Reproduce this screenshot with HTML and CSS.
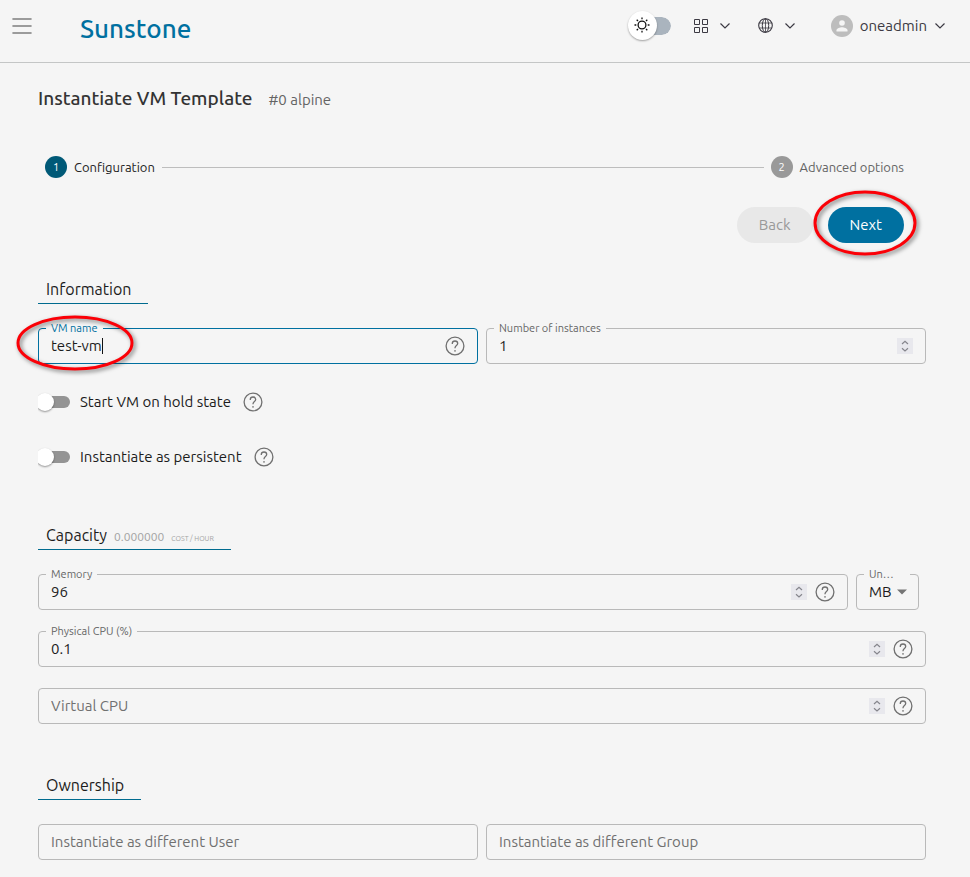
FILE: index.html
```html
<!DOCTYPE html>
<html lang="en">
<head>
<meta charset="utf-8">
<title>Sunstone</title>
<link rel="stylesheet" href="styles.css">
</head>
<body>
<svg class="defs" aria-hidden="true">
  <symbol id="chevron" viewBox="0 0 12 8"><path d="M1.500 1.500 6 6l4.500-4.500" fill="none" stroke="currentColor" stroke-width="1.200"/></symbol>
  <symbol id="help" viewBox="0 0 20 20"><g fill="none" stroke="currentColor" stroke-width="1.300"><circle cx="10" cy="10" r="8.900"/><path d="M7.300 8V7.400a2.700 2.400 0 0 1 5.400 0c0 2-2.700 2.200-2.700 4.500v.4"/></g><circle cx="10" cy="14.900" r=".8" fill="currentColor"/></symbol>
  <symbol id="spin" viewBox="0 0 16 16"><path d="M5 6l3-2.700L11 6M5 10.300l3 2.700 3-2.700" fill="none" stroke="currentColor" stroke-width="1.200"/></symbol>
</svg>
<header class="topbar">
  <button class="icon-btn menu" aria-label="Menu"><svg width="20" height="18" viewBox="0 0 20 18"><path d="M1 2h18M1 9h18M1 16h18" stroke="#7d7d7d" stroke-width="1.600" stroke-linecap="round"/></svg></button>
  <a class="brand" href="#">Sunstone</a>
  <nav class="tools">
    <label class="theme">
      <input type="checkbox" aria-label="Dark theme">
      <span class="theme-thumb"><svg width="16" height="16" viewBox="0 0 16 16" fill="none" stroke="#111"><circle cx="8" cy="8" r="3.900" stroke-width="1.300"/><path d="M8 .5v1.800M8 13.700v1.800M.5 8h1.800M13.700 8h1.800M2.700 2.700 4 4M12 12l1.300 1.300M2.700 13.300 4 12M12 4l1.300-1.300" stroke-width="1.300"/></svg></span>
    </label>
    <button class="icon-btn pair apps" aria-label="Views"><svg width="14" height="14" viewBox="0 0 14 14" fill="none" stroke="currentColor"><path d="M.5.5h5v5h-5zM8.500.5h5v5h-5zM.5 8.500h5v5h-5zM8.500 8.500h5v5h-5z"/></svg><svg width="12" height="8"><use href="#chevron"/></svg></button>
    <button class="icon-btn pair lang" aria-label="Language"><svg width="15" height="15" viewBox="0 0 15 15" fill="none" stroke="currentColor"><circle cx="7.500" cy="7.500" r="6.800" stroke-width="1.100"/><ellipse cx="7.500" cy="7.500" rx="3.200" ry="6.800"/><path d="M1.200 5h12.600M1.200 10h12.600M7.500.7v13.600" stroke-width=".8"/></svg><svg width="12" height="8"><use href="#chevron"/></svg></button>
    <button class="icon-btn user"><svg width="22" height="22" viewBox="0 0 22 22"><circle cx="11" cy="11" r="11" fill="#bdbdbd"/><circle cx="11" cy="8" r="2.800" fill="#f5f5f5"/><path d="M5.500 16.500v-1.200c0-2 3.700-3 5.500-3s5.500 1 5.500 3v1.200z" fill="#f5f5f5"/></svg><span>oneadmin</span><svg width="12" height="8"><use href="#chevron"/></svg></button>
  </nav>
</header>

<main>
  <div class="title"><h1>Instantiate VM Template</h1><span>#0 alpine</span></div>

  <div class="wizard">
    <ol class="stepper">
      <li class="step active"><b>1</b><span>Configuration</span></li>
      <li class="line" aria-hidden="true"></li>
      <li class="step"><b>2</b><span>Advanced options</span></li>
    </ol>
    <div class="actions">
      <button class="btn" disabled>Back</button>
      <div class="marked">
        <button class="btn primary">Next</button>
        <svg class="mark mark-next" viewBox="0 0 112 74" aria-hidden="true"><ellipse cx="52" cy="34" rx="50" ry="31"/></svg>
      </div>
    </div>
  </div>

  <section>
    <h2>Information</h2>
    <div class="cols">
      <div class="field focused">
        <label for="name">VM name</label>
        <input class="fit" id="name" type="text" value="test-vm"><i class="caret"></i>
        <button class="icon-btn help" aria-label="Help"><svg width="20" height="20"><use href="#help"/></svg></button>
        <svg class="mark mark-name" viewBox="0 0 126 64" aria-hidden="true"><ellipse cx="59" cy="28" rx="57" ry="26"/></svg>
      </div>
      <div class="field">
        <label for="count">Number of instances</label>
        <input id="count" type="number" value="1">
        <svg class="spin" width="16" height="16"><use href="#spin"/></svg>
      </div>
    </div>
    <div class="toggle"><input id="hold" type="checkbox"><label for="hold">Start VM on hold state</label><button class="icon-btn help" aria-label="Help"><svg width="20" height="20"><use href="#help"/></svg></button></div>
    <div class="toggle"><input id="persist" type="checkbox"><label for="persist">Instantiate as persistent</label><button class="icon-btn help" aria-label="Help"><svg width="20" height="20"><use href="#help"/></svg></button></div>
  </section>

  <section>
    <h2>Capacity <span class="cost">0.000000</span> <small>COST / HOUR</small></h2>
    <div class="memory">
      <div class="field">
        <label for="mem">Memory</label>
        <input id="mem" type="number" value="96">
        <svg class="spin" width="16" height="16"><use href="#spin"/></svg>
        <button class="icon-btn help" aria-label="Help"><svg width="20" height="20"><use href="#help"/></svg></button>
      </div>
      <div class="field unit">
        <label for="unit">Un…</label>
        <select id="unit"><option>MB</option><option>GB</option></select>
        <svg class="arrow" width="10" height="6" viewBox="0 0 10 6" aria-hidden="true"><path d="M0 .5h10l-5 5z" fill="#757575"/></svg>
      </div>
    </div>
    <div class="field">
      <label for="cpu">Physical CPU (%)</label>
      <input id="cpu" type="number" step="0.1" value="0.1">
      <svg class="spin" width="16" height="16"><use href="#spin"/></svg>
      <button class="icon-btn help" aria-label="Help"><svg width="20" height="20"><use href="#help"/></svg></button>
    </div>
    <div class="field">
      <input id="vcpu" type="number" placeholder="Virtual CPU" aria-label="Virtual CPU">
      <svg class="spin" width="16" height="16"><use href="#spin"/></svg>
      <button class="icon-btn help" aria-label="Help"><svg width="20" height="20"><use href="#help"/></svg></button>
    </div>
  </section>

  <section>
    <h2>Ownership</h2>
    <div class="cols">
      <div class="field"><input type="text" placeholder="Instantiate as different User" aria-label="Instantiate as different User"></div>
      <div class="field"><input type="text" placeholder="Instantiate as different Group" aria-label="Instantiate as different Group"></div>
    </div>
  </section>
</main>
</body>
</html>
```
FILE: styles.css
```css
* { box-sizing: border-box; }

body {
  margin: 0;
  background: #f5f5f5;
  color: #1c1c1c;
  font: 15px/20px Ubuntu, "Noto Sans", sans-serif;
}

svg { display: block; flex: none; }
.defs { position: absolute; width: 0; height: 0; }
button, input, select { font: inherit; color: inherit; }

.icon-btn {
  display: flex;
  align-items: center;
  border: 0;
  padding: 0;
  background: none;
  color: #3c3a43;
}

/* Top bar */
.topbar {
  display: flex;
  align-items: center;
  height: 63px;
  padding: 0 24px 11px 12px;
  border-bottom: 1px solid #c4c6c6;
}
.brand {
  margin: 6px 0 0 48px;
  color: #0070a0;
  font-size: 26px;
  line-height: 32px;
  font-weight: 500;
  text-decoration: none;
}
.tools { display: flex; align-items: center; margin-left: auto; }
.theme { display: flex; position: relative; }
.theme input {
  appearance: none;
  width: 43px;
  height: 18px;
  margin: 0;
  border-left: 10px solid transparent;
  border-radius: 9px;
  background: #aab4be;
  background-clip: padding-box;
}
.theme-thumb {
  position: absolute;
  left: 0;
  top: -6px;
  display: grid;
  place-items: center;
  width: 29px;
  height: 29px;
  border-radius: 50%;
  background: #fff;
  box-shadow: 0 1px 2px rgba(0, 0, 0, .35);
}
.pair { gap: 11px; }
.apps { margin-left: 23px; }
.lang { margin-left: 27px; }
.user { margin-left: 35px; gap: 7px; }

/* Page */
main { padding: 23px 44px 18px 38px; }
.title { display: flex; align-items: baseline; gap: 16px; color: #646464; }
h1 { margin: 0; color: #333; font-size: 19px; line-height: 24px; font-weight: 500; }

.wizard { padding: 46px 22px 0 7px; }
.stepper { display: flex; align-items: center; gap: 7px; margin: 0; padding: 0; list-style: none; }
.step { display: flex; align-items: center; gap: 7px; color: #646464; font-size: 13px; line-height: 22px; }
.step b {
  width: 22px;
  height: 22px;
  border-radius: 50%;
  background: #999;
  color: #fff;
  font-size: 11px;
  font-weight: 400;
  text-align: center;
}
.active { color: #242424; }
.active b { background: #005977; }
.line { flex: 1; height: 1px; background: #bdbdbd; }

.actions { display: flex; justify-content: flex-end; gap: 15px; margin-top: 29px; }
.btn {
  height: 36px;
  padding: 0 22px;
  border: 0;
  border-radius: 18px;
  background: #e8e8e8;
  color: #999;
}
.primary { background: #0070a0; color: #fff; }
.marked { position: relative; }
.mark {
  position: absolute;
  fill: none;
  stroke: #fb0007;
  stroke-width: 3px;
  filter: drop-shadow(2px 2px 2px rgba(0, 0, 0, .5));
  pointer-events: none;
}
.mark-next { left: -15px; top: -18px; width: 112px; }
.mark-name { left: -23px; top: -14px; width: 126px; }

/* Form */
section { display: grid; gap: 21px; margin-top: 46px; }
.wizard + section { margin-top: 31px; }
h2 {
  display: flex;
  align-items: baseline;
  gap: 7px;
  justify-self: start;
  margin: 0 0 3px;
  padding: 3px 17px 2px 8px;
  border-bottom: 1px solid #006b8f;
  font-size: 16px;
  line-height: 24px;
  font-weight: 400;
}
.cost { color: #a3a3a3; font-size: 12px; line-height: 16px; }
small { color: #a3a3a3; font-size: 7px; line-height: 16px; }

.cols { display: grid; grid-template-columns: 1fr 1fr; gap: 8px; }
.memory { display: flex; gap: 8px; padding-right: 7px; }
.memory .field { flex: 1; }
.memory .unit { flex: 0 0 63px; padding-right: 11px; }

.field {
  position: relative;
  display: flex;
  align-items: center;
  height: 36px;
  min-width: 0;
  padding: 0 12px;
  border: 1px solid #b9b9b9;
  border-radius: 4px;
}
.field label {
  position: absolute;
  left: 7px;
  top: -9px;
  padding: 0 5px;
  background: #f5f5f5;
  color: #666;
  font-size: 11px;
  line-height: 16px;
}
.unit label { padding-right: 16px; }
.field input, .field select {
  flex: 1;
  min-width: 0;
  height: 32px;
  padding: 0;
  border: 0;
  outline: 0;
  background: none;
  appearance: none;
}
.field input { padding-bottom: 2px; }
.field input[type="number"] { appearance: textfield; }
.field input::placeholder { color: #707070; opacity: 1; }
.field .fit { flex: none; field-sizing: content; }
.caret { width: 1px; height: 16px; background: #111; }
.focused { border-color: #0070a0; }
.focused label { color: #0070a0; }
.focused .help { margin-left: auto; }
.help { color: #707070; }
.spin { background: #e8e8ed; color: #85858c; }
.spin + .help { margin-left: 8px; }

.toggle { display: flex; align-items: center; height: 34px; }
.toggle input {
  appearance: none;
  position: relative;
  width: 32px;
  height: 12px;
  margin: 0 10px 0 0;
  border-radius: 6px;
  background: #949494;
  clip-path: inset(-4px 0 -6px 0);
}
.toggle input::before {
  content: "";
  position: absolute;
  left: -2px;
  top: -3px;
  width: 18px;
  height: 18px;
  border-radius: 50%;
  background: #fff;
  box-shadow: 0 1px 2px rgba(0, 0, 0, .4);
}
.toggle .help { margin-left: 12px; }
```
